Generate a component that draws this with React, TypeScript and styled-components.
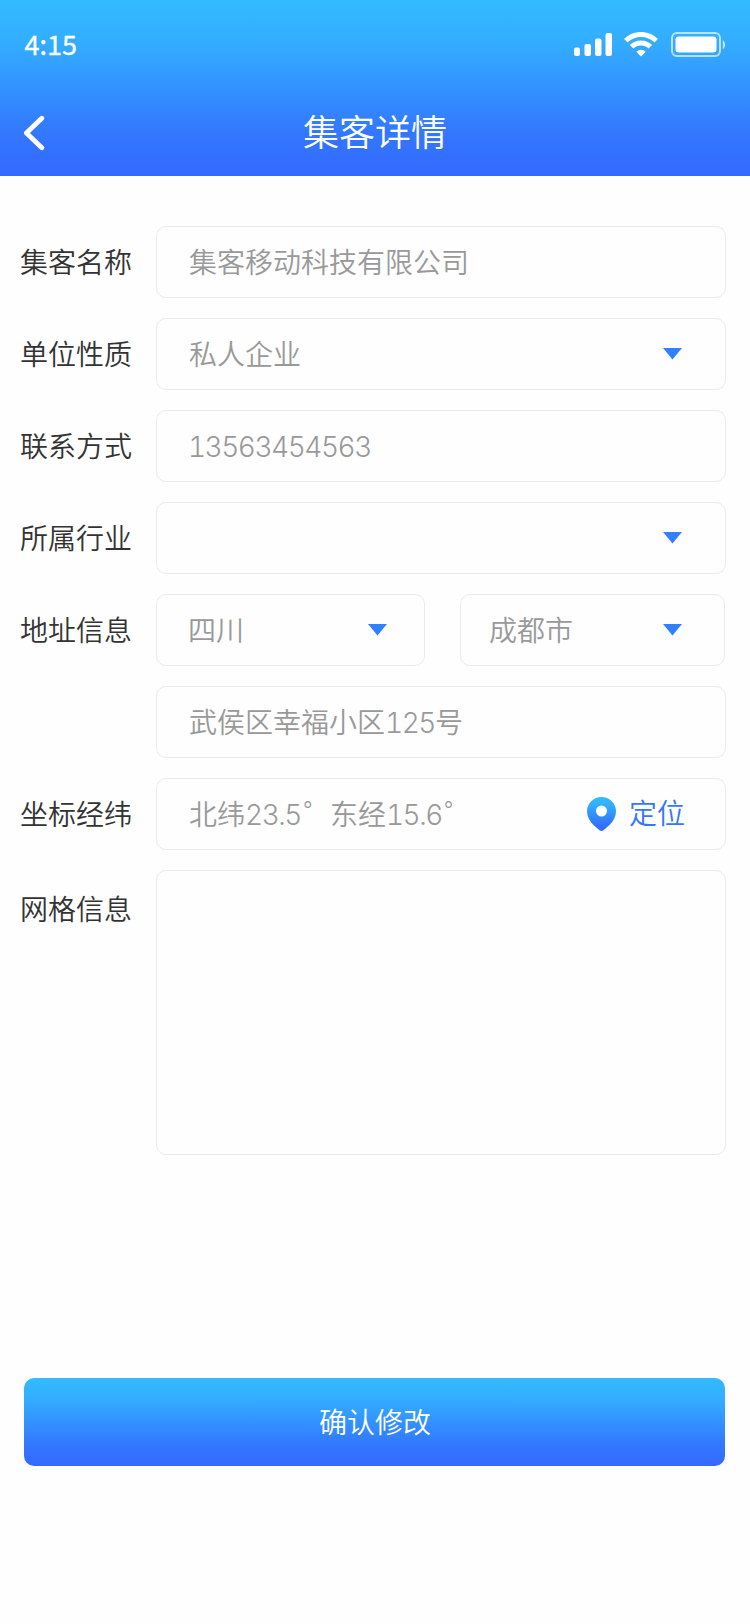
import React from 'react';
import styled, { createGlobalStyle } from 'styled-components';

const brandGradient = 'linear-gradient(180deg, #33bbff 0%, #33adff 24%, #3377ff 76%, #3369ff 100%)';
const textFont = '"Noto Sans CJK SC DemiLight", "Noto Sans CJK SC", sans-serif';

const GlobalStyle = createGlobalStyle`
  * { box-sizing: border-box; }
  body {
    margin: 0;
    background: #fefefe;
    font-family: ${textFont};
  }
`;

const Screen = styled.div`
  display: flex;
  flex-direction: column;
  width: 750px;
  height: 1624px;
  background: #fefefe;
`;

const Header = styled.header`
  height: 176px;
  background: ${brandGradient};
  color: #fff;
`;

const StatusBar = styled.div`
  display: flex;
  align-items: center;
  justify-content: space-between;
  height: 90px;
  padding: 0 25px 0 24.5px;
`;

const Time = styled.span`
  padding-bottom: 3px;
  font-family: "Noto Sans CJK SC", sans-serif;
  font-size: 27px;
  font-weight: 400;
  line-height: 40px;
  -webkit-text-stroke: 0.3px #fff;
`;

const StatusIcons = styled.div`
  display: flex;
  align-items: center;
`;

const NavBar = styled.div`
  display: grid;
  grid-template-columns: 100px 1fr 100px;
  align-items: center;
  height: 86px;
`;

const BackButton = styled.button`
  display: flex;
  padding: 0 0 0 23px;
  border: 0;
  background: none;
`;

const Title = styled.h1`
  margin: 0;
  padding-bottom: 6px;
  font-size: 36px;
  font-weight: 350;
  line-height: 80px;
  text-align: center;
`;

const Form = styled.form`
  display: flex;
  flex-direction: column;
  gap: 20px;
  padding: 50px 24px 0 20px;
`;

const Row = styled.div<{ $top?: boolean }>`
  display: flex;
  align-items: ${p => (p.$top ? 'flex-start' : 'stretch')};
`;

const Label = styled.label`
  flex: 0 0 136px;
  color: #333;
  font-size: 28px;
  font-weight: 350;
  line-height: 70px;
  white-space: nowrap;
`;

const TopLabel = styled(Label)`
  padding-top: 3px;
`;

const Field = styled.div<{ $width?: number; $height?: number; $indent?: number; $end?: number }>`
  display: flex;
  align-items: center;
  justify-content: space-between;
  width: ${p => p.$width ?? 570}px;
  height: ${p => p.$height ?? 72}px;
  padding: 0 ${p => p.$end ?? 43}px 0 ${p => p.$indent ?? 32}px;
  border: 1px solid #ebebeb;
  border-radius: 10px;
`;

const SplitFields = styled.div`
  display: flex;
  gap: 35px;
`;

const Value = styled.span`
  padding-bottom: 2px;
  color: #999;
  font-size: 28px;
  font-weight: 350;
  line-height: 42px;
  white-space: pre;
`;

const Digits = styled.span<{ $lead?: boolean }>`
  margin-left: ${p => (p.$lead ? -1 : 0)}px;
  font-family: Inter, sans-serif;
  font-weight: 300;
  font-feature-settings: "tnum" 1;
  letter-spacing: -1.5px;
  line-height: 0;
`;

const Locate = styled.button`
  display: flex;
  align-items: center;
  gap: 13px;
  padding: 0;
  border: 0;
  background: none;
  color: #3377ff;
  font: 350 28px/42px ${textFont};
`;

const LocateText = styled.span`
  padding-bottom: 4px;
`;

const SubmitButton = styled.button`
  width: 701px;
  height: 88px;
  margin: 223px 0 0 24px;
  padding: 0 0 2px 1px;
  border: 0;
  border-radius: 10px;
  background: ${brandGradient};
  color: #fff;
  font: 350 28px/42px ${textFont};
`;

const Caret = () => (
  <svg width="19" height="12" viewBox="0 0 19 12" fill="#3080ff">
    <path d="M0 0h19L9.500 11.500z" />
  </svg>
);

const SignalIcon = () => (
  <svg width="39" height="24" viewBox="0 0 39 24" fill="#fff">
    <rect x="0" y="14.5" width="6" height="8.5" rx="2" />
    <rect x="10.5" y="11" width="6.5" height="12" rx="2" />
    <rect x="21" y="5.5" width="6.5" height="17.5" rx="2" />
    <rect x="31.5" y="0" width="6.5" height="23" rx="2" />
  </svg>
);

const WifiIcon = () => (
  <svg width="34" height="26" viewBox="0 0 34 26" fill="none" stroke="#fff" strokeWidth="5">
    <path d="M1.8 8.700a21.6 21.6 0 0 1 30.4 0" />
    <path d="M7.6 14.800a13.4 13.4 0 0 1 18.8 0" />
    <path d="M12.4 19.700a6.6 6.6 0 0 1 9.2 0L17.700 24q-.7.600-1.400 0z" fill="#fff" stroke="none" />
  </svg>
);

const BatteryIcon = () => (
  <svg width="54" height="26" viewBox="0 0 54 26">
    <rect x="1" y="1" width="48" height="23" rx="5" fill="none" stroke="#fff" strokeOpacity=".65" strokeWidth="2" />
    <rect x="4.5" y="4.5" width="41" height="16" rx="3" fill="#fff" />
    <path d="M51.8 8.2c3 1.5 3 7.5 0 9z" fill="#fff" fillOpacity=".7" />
  </svg>
);

const BackIcon = () => (
  <svg width="24" height="36" viewBox="0 0 24 36" fill="none" stroke="#fff" strokeWidth="4.8" strokeLinecap="round" strokeLinejoin="round">
    <path d="M18.8 3.2 3.4 18l15.4 14.8" />
  </svg>
);

const PinIcon = () => (
  <svg width="29" height="34" viewBox="0 0 29 34">
    <defs>
      <linearGradient id="pin" x1="0" y1="0" x2="0" y2="1">
        <stop offset="0" stopColor="#33bbff" />
        <stop offset=".25" stopColor="#33adff" />
        <stop offset=".76" stopColor="#3377ff" />
        <stop offset="1" stopColor="#3369ff" />
      </linearGradient>
    </defs>
    <path
      fill="url(#pin)"
      fillRule="evenodd"
      d="M14.5 0C6.5 0 0 6.300 0 14.200c0 5.200 2.500 9.800 6.500 13.800l6 5.300c1.300.9 2.700.9 4 0l6-5.300C26.500 24 29 19.400 29 14.200 29 6.300 22.500 0 14.500 0zm0 8.500a5.500 5.500 0 1 1 0 11 5.500 5.500 0 0 1 0-11z"
    />
  </svg>
);

const SignalGap = styled.span`
  display: flex;
  margin-right: 11px;
`;

const WifiGap = styled.span`
  display: flex;
  margin-right: 13px;
`;

const Degree = styled.span<{ $wide?: boolean }>`
  display: inline-block;
  width: ${p => (p.$wide ? 29 : 10)}px;
  padding-left: 2px;
  font-family: Inter, sans-serif;
  font-size: 21px;
  font-weight: 300;
  line-height: 1;
  vertical-align: 8px;
`;

export default function App() {
  return (
    <>
      <GlobalStyle />
      <Screen>
        <Header>
          <StatusBar>
            <Time>4:15</Time>
            <StatusIcons>
              <SignalGap><SignalIcon /></SignalGap>
              <WifiGap><WifiIcon /></WifiGap>
              <BatteryIcon />
            </StatusIcons>
          </StatusBar>
          <NavBar>
            <BackButton type="button" aria-label="返回"><BackIcon /></BackButton>
            <Title>集客详情</Title>
          </NavBar>
        </Header>
        <Form>
          <Row>
            <Label>集客名称</Label>
            <Field><Value>集客移动科技有限公司</Value></Field>
          </Row>
          <Row>
            <Label>单位性质</Label>
            <Field><Value>私人企业</Value><Caret /></Field>
          </Row>
          <Row>
            <Label>联系方式</Label>
            <Field><Value><Digits $lead>13563454563</Digits></Value></Field>
          </Row>
          <Row>
            <Label>所属行业</Label>
            <Field><Value /><Caret /></Field>
          </Row>
          <Row>
            <Label>地址信息</Label>
            <SplitFields>
              <Field $width={269} $indent={31} $end={37}><Value>四川</Value><Caret /></Field>
              <Field $width={265} $indent={28} $end={42}><Value>成都市</Value><Caret /></Field>
            </SplitFields>
          </Row>
          <Row>
            <Label />
            <Field><Value>武侯区幸福小区<Digits>125</Digits>号</Value></Field>
          </Row>
          <Row>
            <Label>坐标经纬</Label>
            <Field $end={40}>
              <Value>
                北纬<Digits>23.5</Digits><Degree $wide>°</Degree>东经<Digits>15.6</Digits><Degree>°</Degree>
              </Value>
              <Locate type="button"><PinIcon /><LocateText>定位</LocateText></Locate>
            </Field>
          </Row>
          <Row $top>
            <TopLabel>网格信息</TopLabel>
            <Field $height={285} />
          </Row>
        </Form>
        <SubmitButton type="button">确认修改</SubmitButton>
      </Screen>
    </>
  );
}
